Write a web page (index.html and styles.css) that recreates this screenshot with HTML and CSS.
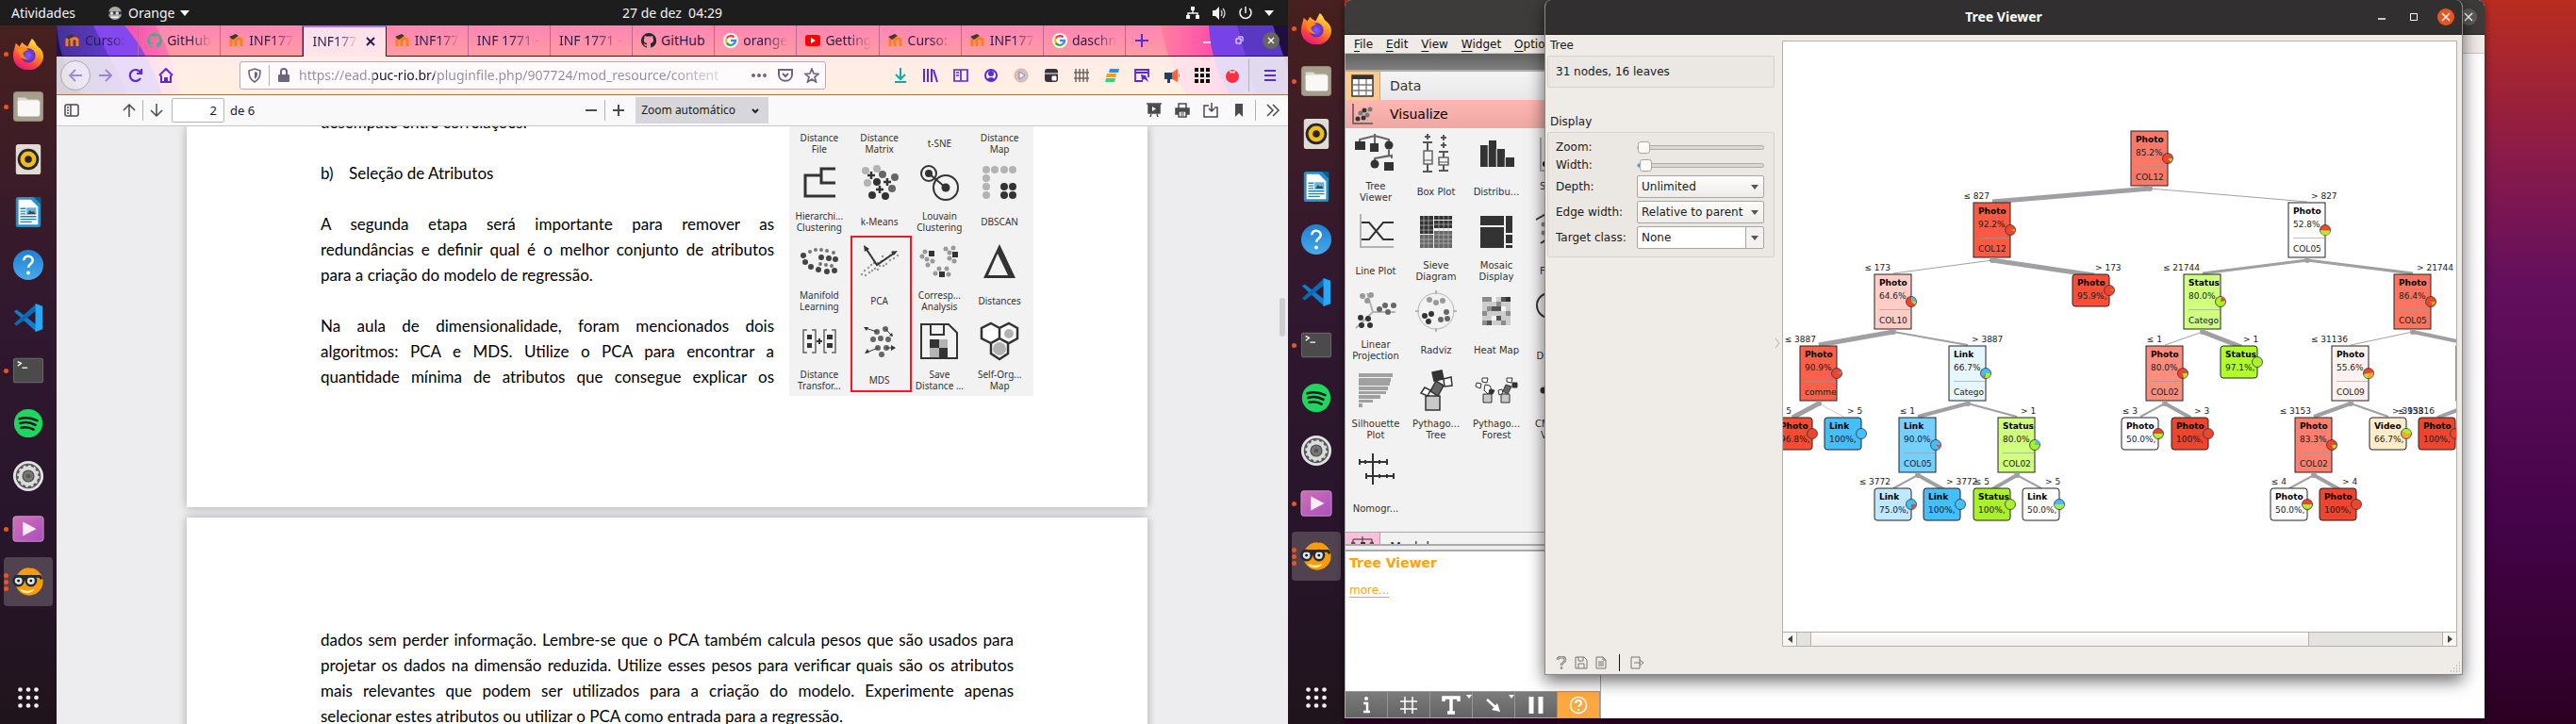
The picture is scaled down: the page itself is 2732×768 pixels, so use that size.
FILE: index.html
```html
<!DOCTYPE html>
<html lang="pt-BR">
<head>
<meta charset="utf-8">
<title>Orange – Tree Viewer</title>
<link rel="stylesheet" href="styles.css">
</head>
<body>
<svg class="defs" aria-hidden="true">
  <defs>
    <linearGradient id="g-fox" x1="0.8" y1="0" x2="0.3" y2="1"><stop offset="0" stop-color="#fff44f"/><stop offset=".4" stop-color="#ff9a1f"/><stop offset=".75" stop-color="#ff3d47"/><stop offset="1" stop-color="#e31587"/></linearGradient>
    <radialGradient id="g-globe"><stop offset="0" stop-color="#8a5cff"/><stop offset="1" stop-color="#5f2bb8"/></radialGradient>
    <linearGradient id="g-help" x1="0" y1="0" x2="0" y2="1"><stop offset="0" stop-color="#1d7fd6"/><stop offset="1" stop-color="#4aa9e8"/></linearGradient>
    <linearGradient id="g-video" x1="0" y1="0" x2="1" y2="1"><stop offset="0" stop-color="#d170b4"/><stop offset="1" stop-color="#a94fc0"/></linearGradient>
    <symbol id="i-firefox" viewBox="0 0 36 36"><path d="M22 1c5 4 4 7 7 9 4 3 6 7 6 11A17 16 0 0 1 1 20C1 15 3 11 4 6l4 4 3-5c2 3 4 3 6 5 2-3 3-6 5-9z" fill="url(#g-fox)"/><circle cx="18" cy="20" r="8" fill="url(#g-globe)"/><path d="M6 12c5-2 8-2 12 2-3 0-4 2-6 3 0 3 2 6 6 7-6 1-11-2-12-12z" fill="#ff8a16"/></symbol>
    <symbol id="i-files" viewBox="0 0 36 36"><rect x="1" y="1" width="34" height="34" rx="4" fill="#8f8773"/><rect x="2" y="2" width="32" height="32" rx="3" fill="#a69f8c"/><path d="M6 8h9l2 2h12v5H6z" fill="#ddd9cf"/><rect x="6" y="11" width="25" height="18" rx="2" fill="#f9f8f6"/></symbol>
    <symbol id="i-music" viewBox="0 0 36 36"><rect x="4" y="1" width="28" height="34" rx="3" fill="#e0dcd2"/><circle cx="18" cy="18" r="12" fill="#24252f"/><circle cx="18" cy="18" r="9" fill="#f2bd17"/><circle cx="18" cy="18" r="4" fill="#24252f"/></symbol>
    <symbol id="i-writer" viewBox="0 0 36 36"><rect x="4" y="1" width="28" height="34" rx="3" fill="#2690c6"/><path d="M24 1h8v8z" fill="#0e5a86"/><path d="M7 4h14l8 8v20H7z" fill="#fff"/><path d="M9 14h6M9 17h6M9 20h6M9 23h18M9 26h18M9 29h13" stroke="#1b82b8" stroke-width="1.4"/><path d="M16 13h11v8H16z" fill="#64b5dd"/><path d="M17 20l3-4 2 2 2-1 2 3z" fill="#444"/></symbol>
    <symbol id="i-help" viewBox="0 0 36 36"><circle cx="18" cy="18" r="17" fill="url(#g-help)"/><path d="M13 13c0-7 10-6 10 0 0 4-5 4-5 8" fill="none" stroke="#fff" stroke-width="2.6"/><circle cx="18" cy="27" r="2" fill="#fff"/></symbol>
    <symbol id="i-code" viewBox="0 0 36 36"><path d="M2 11l3-2 22 17v8z" fill="#0e7fd0"/><path d="M2 25l3 2L27 10V2z" fill="#0a6ab5"/><path d="M26 2l8 3v26l-8 3z" fill="#2aa7f5"/></symbol>
    <symbol id="i-term" viewBox="0 0 36 36"><rect x="1" y="4" width="34" height="28" rx="3" fill="#6a6a6a"/><rect x="2" y="5" width="32" height="26" rx="2" fill="#4b4b4b"/><path d="M6 8l4 2-4 3M11 15h6" fill="none" stroke="#fff" stroke-width="1.4"/></symbol>
    <symbol id="i-spotify" viewBox="0 0 36 36"><circle cx="18" cy="18" r="16" fill="#1ed760"/><path d="M8 13c7-2 14-1 20 2M9 18c6-2 12-1 17 2M10 23c5-1 9-1 14 2" fill="none" stroke="#191a19" stroke-width="2.6" stroke-linecap="round"/></symbol>
    <symbol id="i-gear" viewBox="0 0 36 36"><circle cx="18" cy="18" r="17" fill="#e2e2e2"/><circle cx="18" cy="18" r="14" fill="#555"/><circle cx="18" cy="18" r="9" fill="none" stroke="#dcdcdc" stroke-width="4"/><circle cx="18" cy="18" r="11.500" fill="none" stroke="#dcdcdc" stroke-width="2" stroke-dasharray="3 3"/><circle cx="18" cy="18" r="4" fill="none" stroke="#777" stroke-width="3"/></symbol>
    <symbol id="i-video" viewBox="0 0 36 36"><rect x="1" y="4" width="34" height="28" rx="3" fill="url(#g-video)" stroke="#c89ac8"/><path d="M12 10l15 8-15 8z" fill="#f8eaf6"/></symbol>
    <symbol id="i-orange" viewBox="0 0 36 36"><circle cx="19" cy="18" r="15.500" fill="#f79a0c"/><circle cx="7" cy="17" r="5.500" fill="#dfe3ee" stroke="#252a2c" stroke-width="2.600"/><circle cx="21" cy="17" r="5.500" fill="#dfe3ee" stroke="#252a2c" stroke-width="2.600"/><path d="M3 12h28l2 3M12 15h4" fill="none" stroke="#252a2c" stroke-width="3"/><circle cx="7" cy="17" r="1.500"/><circle cx="21" cy="17" r="1.500"/><path d="M8 26c6 3 12 3 17 0-2 6-14 7-17 0z" fill="#fff1a0"/><path d="M20 3l2-2" stroke="#333"/></symbol>
    <symbol id="i-apps" viewBox="0 0 36 36"><path d="M9 9h0M18 9h0M27 9h0M9 18h0M18 18h0M27 18h0M9 27h0M18 27h0M27 27h0" stroke="#f0eff0" stroke-width="5" stroke-linecap="round"/></symbol>
    <symbol id="f-moodle" viewBox="0 0 16 16"><path d="M2 14V8c0-3 5-3 5 0v6M7 8c0-3 6-3 6 0v6" fill="none" stroke="#f98012" stroke-width="3"/><path d="M0 4l7-3 3 2-6 4z" fill="#3a3a3a"/></symbol>
    <symbol id="f-github" viewBox="0 0 16 16"><path d="M8 0a8 8 0 0 0-2.500 15.600c.4.100.5-.2.500-.4v-1.500c-2 .4-2.600-.9-2.700-1.300-.2-.4-.6-.9-.9-1 1.500-.5 1.800 1.300 3.600.7.100-.5.300-.8.500-1C3.500 10.500 2.800 9.200 2.800 7.300c0-.9.300-1.600.8-2.100 0-.2-.4-1.100.1-2.200 0 0 .7-.2 2.300.8a7 7 0 0 1 4 0c1.600-1 2.200-.8 2.200-.8.500 1.100.2 2 .1 2.200.5.500.8 1.200.8 2.100 0 2-.8 3.200-3.500 3.700.3.300.5.800.5 1.500v2.700c0 .2.100.5.500.4A8 8 0 0 0 8 0z" fill="currentColor"/></symbol>
    <symbol id="f-google" viewBox="0 0 16 16"><circle cx="8" cy="8" r="8" fill="#fff"/><g fill="none" stroke-width="2.400"><path d="M11.500 4.500A5 5 0 0 0 3.700 5.500" stroke="#ea4335"/><path d="M3.700 5.500a5 5 0 0 0 0 5" stroke="#fbbc05"/><path d="M3.700 10.500a5 5 0 0 0 7.500 1.200" stroke="#34a853"/><path d="M11.200 11.700A5 5 0 0 0 13 8H8" stroke="#4285f4"/></g></symbol>
    <symbol id="f-youtube" viewBox="0 0 16 16"><rect y="2" width="16" height="12" rx="3" fill="#f00"/><path d="M6 5l5 3-5 3z" fill="#fff"/></symbol>
  </defs>
</svg>

<main class="desktop">
  <section class="screen screen-left">
    <header class="topbar">
      <div class="topbar-left"><button>Atividades</button>
        <button class="app-menu"><svg width="16" height="16" viewBox="0 0 36 36"><circle cx="18" cy="18" r="16" fill="#aaa"/><path d="M2 14h32v7H2z" fill="#333"/><circle cx="10" cy="18" r="4" fill="#ddd"/><circle cx="23" cy="18" r="4" fill="#ddd"/><path d="M8 26h18v3H8z" fill="#fff"/></svg>Orange<svg width="10" height="6" viewBox="0 0 10 6"><path d="M0 0h10L5 6z" fill="#fff"/></svg></button></div>
      <time class="clock">27 de dez&nbsp; 04:29</time>
      <div class="topbar-right">
        <svg width="16" height="16" viewBox="0 0 16 16" fill="#f2f2f2"><path d="M6 1h4v4H6zM1 10h4v4H1zM11 10h4v4h-4z"/><path d="M8 5v3M3 10V8h10v2" fill="none" stroke="#f2f2f2" stroke-width="1.500"/></svg>
        <svg width="16" height="16" viewBox="0 0 16 16" fill="#f2f2f2"><path d="M1 5h3l4-4v14l-4-4H1z"/><path d="M10 5q2 3 0 6M12 3q4 5 0 10" fill="none" stroke="#ccc" stroke-width="1.400"/></svg>
        <svg width="16" height="16" viewBox="0 0 16 16" fill="none" stroke="#f2f2f2" stroke-width="1.500"><path d="M8 1v7M4 3a6 6 0 1 0 8 0"/></svg>
        <svg width="10" height="6" viewBox="0 0 10 6"><path d="M0 0h10L5 6z" fill="#fff"/></svg>
      </div>
    </header>
    <div class="screen-body">
      <nav class="dock" aria-label="Dock">
        <a href="#" class="dock-item run" aria-label="Firefox"><svg><use href="#i-firefox"/></svg></a>
        <a href="#" class="dock-item run" aria-label="Arquivos"><svg><use href="#i-files"/></svg></a>
        <a href="#" class="dock-item" aria-label="Rhythmbox"><svg><use href="#i-music"/></svg></a>
        <a href="#" class="dock-item" aria-label="Writer"><svg><use href="#i-writer"/></svg></a>
        <a href="#" class="dock-item" aria-label="Ajuda"><svg><use href="#i-help"/></svg></a>
        <a href="#" class="dock-item" aria-label="Code"><svg><use href="#i-code"/></svg></a>
        <a href="#" class="dock-item run" aria-label="Terminal"><svg><use href="#i-term"/></svg></a>
        <a href="#" class="dock-item" aria-label="Spotify"><svg><use href="#i-spotify"/></svg></a>
        <a href="#" class="dock-item" aria-label="Ajustes"><svg><use href="#i-gear"/></svg></a>
        <a href="#" class="dock-item run" aria-label="Vídeos"><svg><use href="#i-video"/></svg></a>
        <a href="#" class="dock-item run many active" aria-label="Orange"><svg><use href="#i-orange"/></svg></a>
        <a href="#" class="dock-item dock-apps" aria-label="Aplicativos"><svg><use href="#i-apps"/></svg></a>
      </nav>
      <div class="browser">
        <header class="chrome">
          <svg class="theme theme-l" width="140" height="73" viewBox="0 0 140 73"><defs><linearGradient id="tl"><stop offset="0" stop-color="#45309a"/><stop offset="1" stop-color="#6a3fd8"/></linearGradient><linearGradient id="tp" x1="0" y1="0" x2="1" y2="0"><stop offset=".5" stop-color="#ff3fb4"/><stop offset="1" stop-color="#ff7fae"/></linearGradient></defs><path d="M0 0H105Q122 30 132 73H0z" fill="url(#tp)" opacity=".9"/><path d="M0 0H72Q98 30 112 73H0z" fill="#8547ee"/><path d="M0 0H39L76 73H0z" fill="url(#tl)"/><path d="M0 0Q3 40 27 73H0z" fill="#24124e"/></svg>
          <svg class="theme theme-r" width="140" height="73" viewBox="0 0 140 73"><defs><linearGradient id="tr" x1="0" y1="0" x2="1" y2="0"><stop offset="0" stop-color="#ff7fa0"/><stop offset=".5" stop-color="#ff45ae"/></linearGradient></defs><path d="M5 0H140V73H32Q12 40 5 0z" fill="url(#tr)"/><path d="M56 0H140V73H78Q58 40 56 0z" fill="#7743e6"/><path d="M86 0H140V73H106z" fill="#5b38c4"/><path d="M124 0H140V46z" fill="#1d1040"/></svg>
          <div class="tabs" role="tablist">
            <button class="tab" role="tab"><svg><use href="#f-moodle"/></svg><span>Curso: </span></button>
            <button class="tab green" role="tab"><svg><use href="#f-github"/></svg><span>GitHub</span></button>
            <button class="tab" role="tab"><svg><use href="#f-moodle"/></svg><span>INF177</span></button>
            <button class="tab current" role="tab" aria-selected="true"><span>INF177</span><svg viewBox="0 0 16 16"><path d="M4 4l8 8M12 4l-8 8" stroke="#2b1a4d" stroke-width="2"/></svg></button>
            <button class="tab" role="tab"><svg><use href="#f-moodle"/></svg><span>INF177</span></button>
            <button class="tab" role="tab"><span>INF 1771 -</span></button>
            <button class="tab" role="tab"><span>INF 1771 -</span></button>
            <button class="tab dark" role="tab"><svg><use href="#f-github"/></svg><span class="full">GitHub</span></button>
            <button class="tab" role="tab"><svg><use href="#f-google"/></svg><span>orange</span></button>
            <button class="tab" role="tab"><svg><use href="#f-youtube"/></svg><span>Getting</span></button>
            <button class="tab" role="tab"><svg><use href="#f-moodle"/></svg><span>Curso: </span></button>
            <button class="tab" role="tab"><svg><use href="#f-moodle"/></svg><span>INF177</span></button>
            <button class="tab" role="tab"><svg><use href="#f-google"/></svg><span>daschn</span></button>
            <div class="tab-tools">
              <button aria-label="Nova aba"><svg width="16" height="16" viewBox="0 0 16 16"><path d="M8 1v14M1 8h14" stroke="#5b2ad0" stroke-width="2"/></svg></button>
              <div class="win-controls">
                <button aria-label="Minimizar"><svg width="18" height="18" viewBox="0 0 18 18"><path d="M5 11h8" stroke="#fff" stroke-width="1.500"/></svg></button>
                <button aria-label="Restaurar"><svg width="18" height="18" viewBox="0 0 18 18"><path d="M6 7h5v5H6zM8 5h5v5" fill="none" stroke="#fff"/></svg></button>
                <button aria-label="Fechar"><svg width="18" height="18" viewBox="0 0 18 18"><circle cx="9" cy="9" r="9" fill="#69665c"/><path d="M6 6l6 6M12 6l-6 6" stroke="#fff" stroke-width="1.300"/></svg></button>
              </div>
            </div>
          </div>
          <div class="navbar">
            <button class="back" aria-label="Voltar"><svg viewBox="0 0 16 16"><path d="M15 8H2M8 2L2 8l6 6"/></svg></button>
            <button class="faded" aria-label="Avançar"><svg viewBox="0 0 16 16"><path d="M1 8h13M8 2l6 6-6 6"/></svg></button>
            <button aria-label="Recarregar"><svg viewBox="0 0 16 16"><path d="M13 11a6 6 0 1 1 0-6M14 1v5H9" stroke-width="2.200"/></svg></button>
            <button aria-label="Início"><svg viewBox="0 0 16 16"><path d="M1 8l7-7 7 7M3 8v7h10V8M7 15v-4h2v4" stroke-width="2"/></svg></button>
            <div class="urlbar">
              <svg width="16" height="16" viewBox="0 0 16 16"><path d="M8 1l6 2c0 6-1 9-6 12C3 12 2 9 2 3z" fill="none" stroke="#6c6580" stroke-width="1.600"/><path d="M8 4l3 1c0 3 0 5-3 7z" fill="#6c6580"/></svg>
              <i class="vsep"></i>
              <svg width="16" height="16" viewBox="0 0 16 16"><rect x="2" y="7" width="12" height="8" rx="1" fill="#6c6580"/><path d="M5 7V4a3 3 0 0 1 6 0v3" fill="none" stroke="#6c6580" stroke-width="2"/></svg>
              <input class="url" aria-label="Endereço" value="https://ead.puc-rio.br/pluginfile.php/907724/mod_resource/content">
              <svg width="16" height="16" viewBox="0 0 16 16"><path d="M2 8h0M8 8h0M14 8h0" stroke="#6c6580" stroke-width="4" stroke-linecap="round"/></svg>
              <svg width="16" height="16" viewBox="0 0 16 16" fill="none" stroke="#6c6580" stroke-width="2"><path d="M1 2h14v5c0 9-14 9-14 0zM5 6l3 3 3-3"/></svg>
              <svg width="16" height="16" viewBox="0 0 16 16" fill="none" stroke="#6c6580" stroke-width="1.700"><path d="M8 1l2 5 5 .4-4 3.400L12.500 15 8 12l-4.500 3L5 9.800 1 6.400 6 6z"/></svg>
            </div>
            <div class="exts">
              <svg viewBox="0 0 16 16"><path d="M8 0v11M3 7l5 5 5-5M2 15h12" fill="none" stroke="#12a8a8" stroke-width="2"/></svg>
              <svg viewBox="0 0 16 16"><path d="M1 1v14M5 1v14M9 1v14M11 2l4 13" fill="none" stroke="#5b2ad0" stroke-width="2"/></svg>
              <svg viewBox="0 0 16 16"><path d="M1 2h14v12H1zM8 2v12M3 5h3M3 8h3" fill="none" stroke="#5b2ad0" stroke-width="1.700"/></svg>
              <svg viewBox="0 0 16 16"><circle cx="8" cy="8" r="6" fill="none" stroke="#5b2ad0" stroke-width="2"/><circle cx="8" cy="6" r="3" fill="#5b2ad0"/><path d="M4 12q4-4 8 0l-4 2z" fill="#5b2ad0"/></svg>
              <svg viewBox="0 0 16 16"><circle cx="8" cy="8" r="7" fill="#cfc0cc" stroke="#eba98a"/><path d="M6 4l6 4-6 4z" fill="#fff" stroke="#8c80a8"/></svg>
              <svg viewBox="0 0 16 16"><rect x="1" y="1" width="14" height="14" rx="3" fill="#38333a"/><path d="M1 6h14M9 9h4v4H9z" stroke="#fff" fill="#fff"/></svg>
              <svg viewBox="0 0 16 16"><path d="M2 1v14M6 1v14M10 1v14M14 1v14M0 5h16M0 11h16" stroke="#6c6568" stroke-width="1.500"/></svg>
              <svg viewBox="0 0 16 16"><path d="M6 1h10l-1 4H5z" fill="#2a8df4"/><path d="M3 6h10l-1 4H2z" fill="#ff9d00"/><path d="M2 11h10l-1 4H1z" fill="#3bd07a"/></svg>
              <svg viewBox="0 0 16 16"><path d="M9 14H1V2h14v8M1 5h14" fill="none" stroke="#5b2ad0" stroke-width="1.800"/><path d="M7 7l5 1 3 7-4-3-3 1z" fill="#5b2ad0"/></svg>
              <svg viewBox="0 0 16 16"><path d="M0 5h8v7H6v4H3v-4H0z" fill="#24405c"/><path d="M8 5l6-4v14l-6-3z" fill="#f96538"/><path d="M15 6h1v4h-1z" fill="#999"/></svg>
              <svg viewBox="0 0 16 16"><path d="M0 0h4v4H0zM6 0h4v4H6zM12 0h4v4h-4zM0 6h4v4H0zM6 6h4v4H6zM12 6h4v4h-4zM0 12h4v4H0zM6 12h4v4H6zM12 12h4v4h-4z"/></svg>
              <svg viewBox="0 0 16 16"><circle cx="8" cy="9" r="7" fill="#fb2f3f"/><path d="M8 4L4 2l2 4 2-1 2 1 2-4z" fill="#ffe0e0"/></svg>
            </div>
            <i class="vsep tall"></i>
            <button class="menu" aria-label="Menu"><svg viewBox="0 0 16 16"><path d="M2 3h12M2 8h12M2 13h12" stroke-width="2"/></svg></button>
          </div>
        </header>
        <div class="pdfbar">
          <button aria-label="Painel lateral"><svg viewBox="0 0 16 16"><rect x="1" y="2" width="14" height="12" rx="2"/><path d="M7 2v12M3 5h2M3 8h2M3 11h2"/></svg></button>
          <div class="pdf-group pdf-nav">
            <button aria-label="Anterior"><svg viewBox="0 0 16 16"><path d="M8 15V2M2 8l6-6 6 6"/></svg></button><i class="vsep"></i>
            <button aria-label="Próxima"><svg viewBox="0 0 16 16"><path d="M8 1v13M2 8l6 6 6-6"/></svg></button>
            <input class="page-no" id="page-no" value="2" aria-label="Página"><label for="page-no">de 6</label>
          </div>
          <div class="pdf-group pdf-zoom">
            <button aria-label="Reduzir"><svg viewBox="0 0 16 16"><path d="M2 8h12" stroke-width="2"/></svg></button><i class="vsep"></i>
            <button aria-label="Ampliar"><svg viewBox="0 0 16 16"><path d="M2 8h12M8 2v12" stroke-width="2"/></svg></button>
            <div class="select-wrap zoom-wrap"><select aria-label="Zoom"><option>Zoom automático</option></select><svg class="arrow" width="8" height="6" viewBox="0 0 8 6"><path d="M1 1l3 3 3-3" fill="none" stroke="#222" stroke-width="2"/></svg></div>
          </div>
          <div class="pdf-group pdf-right">
            <button aria-label="Apresentação"><svg viewBox="0 0 16 16"><path d="M0 1h16" /><path d="M2 2h12v9H2z" fill="#4a4a4f"/><path d="M6 4l4 2.500L6 9z" fill="#fff" stroke="none"/><path d="M5 12l-1 3M11 12l1 3"/></svg></button>
            <button aria-label="Imprimir"><svg viewBox="0 0 16 16"><path d="M4 6V1h8v5"/><path d="M1 6h14v6H1z" fill="#4a4a4f"/><path d="M4 9h8v6H4z" fill="#fff"/><path d="M6 11h4M6 13h4" stroke-width="1"/></svg></button>
            <button aria-label="Baixar"><svg viewBox="0 0 16 16"><path d="M6 3H1v12h14V5h-3M9 0v8M6 6l3 3 3-3"/></svg></button>
            <button aria-label="Marcador"><svg viewBox="0 0 16 16"><path d="M4 1h8v14l-4-4-4 4z" fill="#4a4a4f" stroke="none"/></svg></button>
            <i class="vsep"></i>
            <button aria-label="Ferramentas"><svg viewBox="0 0 16 16"><path d="M2 2l6 6-6 6M8 2l6 6-6 6"/></svg></button>
          </div>
        </div>
        <div class="pdf-view">
          <article class="page page-a">
            <div class="text">
              <p>desempate entre correlações.</p>
              <h2><span>b)</span>Seleção de Atributos</h2>
              <p class="just"><span>A segunda etapa será importante para remover as</span><span>redundâncias e definir qual é o melhor conjunto de atributos</span><span class="end">para a criação do modelo de regressão.</span></p>
              <p class="just"><span>Na aula de dimensionalidade, foram mencionados dois</span><span>algoritmos: PCA e MDS. Utilize o PCA para encontrar a</span><span>quantidade mínima de atributos que consegue explicar os</span></p>
            </div>
            <figure class="figure">
              <div class="cell cap"><span>Distance<br>File</span></div><div class="cell cap"><span>Distance<br>Matrix</span></div><div class="cell cap"><span>t-SNE</span></div><div class="cell cap"><span>Distance<br>Map</span></div>
              <div class="cell"><svg viewBox="-20 -20 40 40"><path d="M17 14H-15V-8H2M17-15H2V0H17" fill="none" stroke="#333" stroke-width="3"/></svg><span>Hierarchi...<br>Clustering</span></div>
              <div class="cell"><svg viewBox="-20 -20 40 40" stroke-linecap="round" stroke-width="8"><path d="M-15-13h0M-3-15h0M-13 0h0" stroke="#b3b3b3"/><path d="M3-9h0M16-6h0M13 6h0" stroke="#666"/><path d="M-3-1h0M-8 13h0M6 14h0" stroke="#333"/><path d="M-13-8h8M-9-12v8M4-1h8M8-5v8M-4 7h8M0 3v8" stroke="#333" stroke-width="2.500" stroke-linecap="butt"/></svg><span>k-Means</span></div>
              <div class="cell"><svg viewBox="-20 -20 40 40"><g fill="none" stroke="#333" stroke-width="2"><circle cx="-11" cy="-10" r="8"/><circle cx="7" cy="5" r="13"/><path d="M-11-10L7 5"/></g><g fill="#333"><circle cx="-11" cy="-10" r="4"/><circle cx="7" cy="5" r="4.500"/></g></svg><span>Louvain<br>Clustering</span></div>
              <div class="cell"><svg viewBox="-20 -20 40 40" stroke-linecap="round" stroke-width="8"><path d="M-14-14h0M-5-14h0M5-14h0M14-14h0M-14-5h0M-14 4h0M-14 13h0" stroke="#b3b3b3"/><path d="M5 4h0M14 4h0M5 13h0M14 13h0" stroke="#333"/></svg><span>DBSCAN</span></div>
              <div class="cell"><svg viewBox="-20 -20 40 40" stroke-linecap="round" stroke-width="6" stroke="#444"><path d="M-15 0h0M-9 5h0M-1 8h0M8 10h0M16 9h0M2-5h0M10-4h0M17-3h0M-17-7h0"/><path d="M-10-11h0M-4-13h0M2-13h0M8-12h0M15-10h0M13 4h0M7 3h0M1 2h0" stroke="#777" stroke-width="4"/></svg><span>Manifold<br>Learning</span></div>
              <div class="cell"><svg viewBox="-20 -20 40 40"><path d="M-19 13h0M-15 14h0M-16 9h0M-11 11h0M-12 6h0M-8 9h0M-9 3h0M-5 7h0M-2 8h0M-6 1h0M0 4h0M4 4h0M2-1h0M7 2h0M7-4h0M11-2h0M11-7h0M15-4h0M19-7h0M14-11h0M-2 1h0M3-6h0" stroke="#999" stroke-width="2.500" stroke-linecap="round"/><path d="M-15-15L-3 3 16-10" fill="none" stroke="#333" stroke-width="2"/><path d="M-17-18l6 4-5 3zM19-12l-7 1 3 4z" fill="#333"/></svg><span>PCA</span></div>
              <div class="cell"><svg viewBox="-20 -20 40 40"><path d="M-15-11h0M-18-6h0M-13-3h0M-7-1h0M-12 3h0M7-14h0M15-15h0M11-10h0M11-4h0M16-1h0M0 7h0M8 7h0M-4 12h0M10 13h0" stroke="#999" stroke-width="5" stroke-linecap="round"/><path d="M-11-12h6v6h-6zM14-11h6v6h-6zM0 10h6v6H0z" fill="#333"/></svg><span>Corresp...<br>Analysis</span></div>
              <div class="cell"><svg viewBox="-20 -20 40 40"><path d="M0-19L17 17H-17zM-2-9L-12 14H9z" fill="#333" fill-rule="evenodd"/></svg><span>Distances</span></div>
              <div class="cell"><svg viewBox="-20 -20 40 40"><path d="M-13-12h-4v24h4M-8-12h4v24h-4M8-12h-3v24h3M13-12h4v24h-4" fill="none" stroke="#666" stroke-width="1.500"/><path d="M-13-7h5v5h-5zM-13 2h5v5h-5zM8-7h6v5H8zM8 2h6v5H8zM-3-1h6v2h-6zM-1-3h2v6h-2z" fill="#333"/></svg><span>Distance<br>Transfor...</span></div>
              <div class="cell"><svg viewBox="-20 -20 40 40"><path d="M-3-10h0M6-13h0M-7-2h0M1-3h0M9-2h0M-2 7h0M7 7h0M2 14h0" stroke="#666" stroke-width="6" stroke-linecap="round"/><path d="M-3-10l-12-4M6-13l7 7M-2 7l-12 5M7 7h8" stroke="#333"/><path d="M-17-15h5l-2 4zM14-5l-4-1 3-3zM-16 13l3-5 2 4zM17 7l-5-3v6z" fill="#333"/></svg><span>MDS</span></div>
              <div class="cell"><svg viewBox="-20 -20 40 40"><path d="M-19-18H10L19-9V18H-19zM-9-18v11H5v-11" fill="none" stroke="#333" stroke-width="2"/><path d="M-10-2H0v9h-10zM0 7h9v10H0z" fill="#333"/><path d="M0-2h9v9H0zM-10 7H0v10h-10z" fill="#b3b3b3"/></svg><span>Save<br>Distance ...</span></div>
              <div class="cell"><svg viewBox="-20 -20 40 40"><path d="M-9-19l9 5v11l-9 5-10-5v-11zM10-19l9 5v11l-9 5-10-5v-11zM0-3l9 5v11l-9 6-9-6V2z" fill="#fff" stroke="#333" stroke-width="2.500"/><circle cx="10" cy="-8" r="5" fill="#b3b3b3"/><circle cy="8" r="7" fill="#b3b3b3"/></svg><span>Self-Org...<br>Map</span></div>
              <i class="marker"></i>
            </figure>
          </article>
          <article class="page page-b">
            <p class="just"><span>dados sem perder informação. Lembre-se que o PCA também calcula pesos que são usados para</span><span>projetar os dados na dimensão reduzida. Utilize esses pesos para verificar quais são os atributos</span><span>mais relevantes que podem ser utilizados para a criação do modelo. Experimente apenas</span><span class="end">selecionar estes atributos ou utilizar o PCA como entrada para a regressão.</span></p>
          </article>
          <i class="v-thumb"></i>
        </div>
      </div>
    </div>
  </section>

  <section class="screen screen-right">
    <nav class="dock" aria-label="Dock">
      <a href="#" class="dock-item run" aria-label="Firefox"><svg><use href="#i-firefox"/></svg></a>
      <a href="#" class="dock-item run" aria-label="Arquivos"><svg><use href="#i-files"/></svg></a>
      <a href="#" class="dock-item" aria-label="Rhythmbox"><svg><use href="#i-music"/></svg></a>
      <a href="#" class="dock-item" aria-label="Writer"><svg><use href="#i-writer"/></svg></a>
      <a href="#" class="dock-item" aria-label="Ajuda"><svg><use href="#i-help"/></svg></a>
      <a href="#" class="dock-item" aria-label="Code"><svg><use href="#i-code"/></svg></a>
      <a href="#" class="dock-item run" aria-label="Terminal"><svg><use href="#i-term"/></svg></a>
      <a href="#" class="dock-item" aria-label="Spotify"><svg><use href="#i-spotify"/></svg></a>
      <a href="#" class="dock-item" aria-label="Ajustes"><svg><use href="#i-gear"/></svg></a>
      <a href="#" class="dock-item run" aria-label="Vídeos"><svg><use href="#i-video"/></svg></a>
      <a href="#" class="dock-item run many active" aria-label="Orange"><svg><use href="#i-orange"/></svg></a>
      <a href="#" class="dock-item dock-apps" aria-label="Aplicativos"><svg><use href="#i-apps"/></svg></a>
    </nav>
    <div class="workspace">
      <section class="window main-win">
        <header class="titlebar"><div class="win-controls"><button aria-label="Fechar"><svg width="18" height="18" viewBox="0 0 18 18"><circle cx="9" cy="9" r="9" fill="#5d5c5a"/><path d="M5 5l8 8M13 5l-8 8" stroke="#fff" stroke-width="1.500"/></svg></button></div></header>
        <nav class="menubar"><button><u>F</u>ile</button><button><u>E</u>dit</button><button><u>V</u>iew</button><button><u>W</u>idget</button><button><u>O</u>ptions</button></nav>
        <div class="main-body">
          <aside class="toolbox">
            <div class="tool-head"></div>
            <div class="drawer">
              <button class="category data"><span class="cat-icon"><svg width="24" height="24" viewBox="0 0 24 24"><path d="M1 1h22v22H1z" fill="#fff" stroke="#333" stroke-width="1.500"/><path d="M1 1h22v4H1z" fill="#333"/><path d="M1 11h22M1 17h22M8 5v18M16 5v18" stroke="#777" stroke-width="1.300"/></svg></span>Data</button>
              <button class="category vis"><span class="cat-icon"><svg width="24" height="24" viewBox="0 0 24 24"><path d="M2 1v21h21" fill="none" stroke="#555" stroke-width="1.500"/><g stroke-width="5" stroke-linecap="round"><path d="M7 17h0M13 16h0M14 8h0" stroke="#333"/><path d="M10 11h0M17 13h0M20 7h0" stroke="#777"/></g></svg></span>Visualize</button>
              <div class="widgets">
                <div class="cell"><svg viewBox="-20 -20 40 40"><path d="M-1-20v12M-17-8v-6l16-4 15 4v6M14-3v6L-1 6v6M-1 6l18-3v3" fill="none" stroke="#666" stroke-width="2"/><path d="M-22-12h11v9h-11zM-6-10h9v9h-9zM9 10h10v9H9z" fill="#333"/><g fill="#333"><circle cx="14" cy="-8" r="4.500"/><circle cx="-1" cy="12" r="4.500"/></g></svg><span>Tree<br>Viewer</span></div>
                <div class="cell"><svg viewBox="-20 -20 40 40"><path d="M-9-20v6M-12-17h6M-9-11V20M-14-11h10M-14 20h10M8-19v6M5-16h6M8-11v6M5-8h6M8-1V19M3-1h10M3 19h10" stroke="#555" stroke-width="2"/><path d="M-13-2h9v14h-9zM3 5h10v8H3z" fill="#f2f2f2" stroke="#666" stroke-width="1.500"/><path d="M-13 8h9M3 10h10" stroke="#555"/></svg><span>Box Plot</span></div>
                <div class="cell"><svg viewBox="-20 -20 40 40"><path d="M-17-8h8v23h-8zM-8-13h8v28h-8zM1-4h8v19H1zM10 5h9v10h-9z" fill="#333"/><path d="M-9-8v23M0-4v19M9 5v10" stroke="#999"/></svg><span>Distribu...</span></div>
                <div class="cell"><svg viewBox="-20 -20 40 40"><path d="M-17-16v35h34" fill="none" stroke="#aaa" stroke-width="2"/><circle cx="-12" cy="12" r="3"/></svg><span>Scatter<br>Plot</span></div>
                <div class="cell"><svg viewBox="-20 -20 40 40"><path d="M-16-19v35h35" fill="none" stroke="#b3b3b3" stroke-width="2"/><path d="M-15-10h8L8 8h11M-15 8h8L8-10h11" fill="none" stroke="#333" stroke-width="2"/></svg><span>Line Plot</span></div>
                <div class="cell"><svg viewBox="-20 -20 40 40"><path d="M-17-17h14v19h-14zM-2-17h19v4H-2zM-2-12h19v8H-2z" fill="#333"/><path d="M-17 3h14v14h-14zM-2-1h19v18H-2z" fill="#666"/><path d="M-13-17v34M-8-17v34M3-17v34M8-17v34M13-17v34M-17-12h14M-17-7h14M-17-2h14M-17 8h34M-17 12h34M-2-8h19M-2 3h19" stroke="#bbb" stroke-width=".7"/></svg><span>Sieve<br>Diagram</span></div>
                <div class="cell"><svg viewBox="-20 -20 40 40"><path d="M-17-17H8v10h-25zM-17-5H8v22h-25zM10-17h7V1h-7zM10 3h7v9h-7zM10 14h7v3h-7z" fill="#333"/></svg><span>Mosaic<br>Display</span></div>
                <div class="cell"><svg viewBox="-20 -20 40 40"><path d="M-22-13l14-8M-17 12l8-5" stroke="#333" stroke-width="2"/><path d="M-14-8h0M-14 1h0" stroke="#888" stroke-width="5" stroke-linecap="round"/></svg><span>FreeViz</span></div>
                <div class="cell"><svg viewBox="-20 -20 40 40"><path d="M-21 18L-3 1l-6-20M-3 1h24" fill="none" stroke="#b3b3b3" stroke-width="2"/><g stroke-width="6" stroke-linecap="round"><path d="M-14-16h0M-5-17h0M-9-11h0" stroke="#999"/><path d="M4-2h0M10-6h0M19-6h0M13 1h0" stroke="#666"/><path d="M-16 7h0M-8 8h0M-15 15h0M-6 15h0" stroke="#333"/></g></svg><span>Linear<br>Projection</span></div>
                <div class="cell"><svg viewBox="-20 -20 40 40"><circle r="19" fill="none" stroke="#b3b3b3"/><path d="M0-22v4M0 18v4M-22 0h4M18 0h4" stroke="#b3b3b3" stroke-width="2"/><g stroke-width="6" stroke-linecap="round"><path d="M-7-12h0M0-9h0M7-11h0" stroke="#999"/><path d="M11 1h0M5 9h0M12 8h0" stroke="#666"/><path d="M-12 5h0M-5 3h0M-8 11h0" stroke="#333"/></g></svg><span>Radviz</span></div>
                <div class="cell"><svg viewBox="-20 -20 40 40"><path d="M-15-15h30v30h-30z" fill="#ccc"/><path d="M5-15h10v5H5zM-5-5h10v5H-5zM-10 10h5v5h-5zM0 5h5v5H0z" fill="#555"/><path d="M-15-15h10v5h-10zM-10-5h5v5h-5zM-15 0h5v5h-5zM5-5h5v5H5zM-15 10h5v5h-5zM5 10h5v5H5zM10 0h5v5h-5zM0-10h5v5H0z" fill="#8c8c8c"/><path d="M-5-15h5v5h-5zM5-5h5v5H5zM-5 5h5v5h-5z" fill="#f4f4f4"/><path d="M10-15h5v5h-5z" fill="#333"/></svg><span>Heat Map</span></div>
                <div class="cell"><svg viewBox="-20 -20 40 40"><circle cx="-8" cy="-6" r="13" fill="none" stroke="#333" stroke-width="2"/></svg><span>Venn<br>Diagram</span></div>
                <div class="cell"><svg viewBox="-20 -20 40 40"><path d="M-18-18h36v4h-36zM-18-13h34v4h-34zM-18-9h33v4h-33zM-18-4h31v4h-31zM-18 1h29v3h-29zM-18 5H5v4h-23zM-18 10H-3v3h-15zM-18 14h4v4h-4z" fill="#a0a0a0"/></svg><span>Silhouette<br>Plot</span></div>
                <div class="cell"><svg viewBox="-20 -20 40 40" stroke="#333" stroke-width="1.500"><path d="M-11 6H4v15h-15z" fill="#c8c8c8"/><path d="M0-10l8 5L2 6l-8-5z" fill="#666"/><path d="M-4-19l10-2 2 9-10 2z" fill="#333"/><path d="M8-12l8-2 1 9-8 1zM-12-3l6 3-3 6-7-3z" fill="#fff"/></svg><span>Pythago...<br>Tree</span></div>
                <div class="cell"><svg viewBox="-20 -20 40 40" stroke="#333"><path d="M-14 4h9v9h-9zM5 4h9v9H5z" fill="#c8c8c8"/><path d="M-12-6l5 1 3 7-5 2-4-4zM-15-13h6l-1 5-5-1zM-21-8l5 1-1 5-5-2zM11-13h6l-1 5-5-1zM2 0l4-1 1 4-4 2z" fill="#fff"/><path d="M10-6l6 2-4 8-5-3z" fill="#666"/><path d="M-7-1l5 1-2 4-4-1zM17-8h5v5h-5z" fill="#333"/></svg><span>Pythago...<br>Forest</span></div>
                <div class="cell"><svg viewBox="-20 -20 40 40"><circle cx="-14" cy="0" r="3.500" fill="#333"/></svg><span>CN2 Rule<br>Viewer</span></div>
                <div class="cell"><svg viewBox="-20 -20 40 40"><path d="M-3-17V16M-17-8h29M-10 7h29M-17-11v6M12-11v6M-10 4v6M19 4v6M-11-10v4M4-10v4M4 5v4M12 5v4" stroke="#333" stroke-width="2"/></svg><span>Nomogr...</span></div>
              </div>
              <button class="category model"><span class="cat-icon"><svg width="24" height="24" viewBox="0 0 24 24"><path d="M2 8V4h20v4M12 1v8" fill="none" stroke="#333"/><path d="M2 9h0M22 9h0" stroke="#555" stroke-width="5" stroke-linecap="round"/><path d="M10 7h5v5h-5z" fill="#333"/></svg></span>Model</button>
            </div>
            <div class="splitter"></div>
            <div class="help"><h3>Tree Viewer</h3><a href="#">more...</a></div>
            <div class="tool-foot">
              <button aria-label="Info"><svg viewBox="0 0 20 20"><path d="M10 3h0" stroke="#fff" stroke-width="4" stroke-linecap="round"/><path d="M7 8h4v9M7 17h7" fill="none" stroke="#fff" stroke-width="2.500"/></svg></button>
              <button aria-label="Grade"><svg viewBox="0 0 20 20"><path d="M6 1v18M14 1v18M1 6h18M1 14h18" stroke="#fff" stroke-width="1.500"/></svg></button>
              <button aria-label="Texto"><svg viewBox="0 0 20 20"><path d="M2 6V2h16v4M10 2v17M6 18h8" fill="none" stroke="#fff" stroke-width="3.500"/><path d="M26-1h6l-3 4z" fill="#fff"/></svg></button>
              <button aria-label="Seta"><svg viewBox="0 0 20 20"><path d="M3 4l10 9" stroke="#fff" stroke-width="2.500"/><path d="M17 17l-9-2 6-7z" fill="#fff"/><path d="M26-1h6l-3 4z" fill="#fff"/></svg></button>
              <button aria-label="Pausar"><svg viewBox="0 0 20 20"><path d="M5 1v18M15 1v18" stroke="#fff" stroke-width="5"/></svg></button>
              <button class="on" aria-label="Ajuda"><svg viewBox="0 0 20 20" fill="none" stroke="#fff"><circle cx="10" cy="10" r="8.500" stroke-width="1.500"/><path d="M7 8c0-4 6-4 6 0 0 2-3 2-3 4M10 14v2" stroke-width="2"/></svg></button>
            </div>
          </aside>
          <div class="main-canvas"></div>
        </div>
      </section>

      <section class="window viewer">
        <header class="titlebar"><h1>Tree Viewer</h1>
          <div class="win-controls">
            <button aria-label="Minimizar"><svg width="18" height="18" viewBox="0 0 18 18"><path d="M5 11h8" stroke="#fff" stroke-width="1.500"/></svg></button>
            <button aria-label="Maximizar"><svg width="18" height="18" viewBox="0 0 18 18"><path d="M5.500 5.500h7v7h-7z" fill="none" stroke="#fff"/></svg></button>
            <button aria-label="Fechar"><svg width="18" height="18" viewBox="0 0 18 18"><circle cx="9" cy="9" r="9" fill="#e95420"/><path d="M5 5l8 8M13 5l-8 8" stroke="#fff" stroke-width="1.500"/></svg></button>
          </div></header>
        <div class="viewer-body">
          <aside class="controls">
            <h2>Tree</h2>
            <div class="box info">31 nodes, 16 leaves</div>
            <h2 class="second">Display</h2>
            <form class="box form">
              <label for="zoom">Zoom:</label><input type="range" id="zoom" min="0" max="100" value="0">
              <label for="width">Width:</label><input type="range" id="width" class="filled" min="0" max="100" value="2">
              <label for="depth" class="row">Depth:</label><div class="select-wrap"><select id="depth"><option>Unlimited</option></select><svg class="arrow" width="8" height="5" viewBox="0 0 8 5"><path d="M0 0h8L4 5z" fill="#555"/></svg></div>
              <label for="edge" class="row">Edge width:</label><div class="select-wrap"><select id="edge"><option>Relative to parent</option></select><svg class="arrow" width="8" height="5" viewBox="0 0 8 5"><path d="M0 0h8L4 5z" fill="#555"/></svg></div>
              <label for="target" class="row">Target class:</label><div class="select-wrap combo"><select id="target"><option>None</option></select><svg class="arrow" width="8" height="5" viewBox="0 0 8 5"><path d="M0 0h8L4 5z" fill="#555"/></svg></div>
            </form>
            <svg class="handle" width="6" height="10" viewBox="0 0 6 10"><path d="M1 0l4 5-4 5" fill="none" stroke="#aaa"/></svg>
            <div class="status">
              <button aria-label="Ajuda"><svg viewBox="0 0 14 14"><path d="M3 4c0-4 8-4 8 0 0 3-4 2-4 6" stroke-width="2.500"/><path d="M3 4c0-4 8-4 8 0 0 3-4 2-4 6" stroke="#efebe7" stroke-width=".8"/><circle cx="7" cy="12.500" r="1"/></svg></button>
              <button aria-label="Salvar"><svg viewBox="0 0 14 14"><path d="M1 1h9l3 3v9H1zM4 1v4h5V1M4 13V8h6v5"/></svg></button>
              <button aria-label="Relatório"><svg viewBox="0 0 14 14"><path d="M2 1h7l3 3v9H2zM9 1v3h3M4 6h6M4 8h6M4 10h6"/></svg></button>
              <i></i>
              <button aria-label="Saída"><svg viewBox="0 0 14 14"><path d="M10 4V1H1v12h9v-3M4 7h7M10 4l4 3-4 3z"/></svg></button>
            </div>
          </aside>
          <div class="scene-col">
            <div class="scene">
              <svg class="tree" width="100%" height="100%">
                <defs>
                  <clipPath id="nc"><rect width="39" height="58"/></clipPath>
                  <g id="hub"><circle cx="20" cy="61" r="3" fill="#a0a0a4"/></g>
                  <g id="rule"><path d="M5 37.500h33" stroke="#999" stroke-opacity=".6"/></g>
                </defs>
                <g class="edges">
                  <path d="M389 156L222 170" stroke-width="5"/><path d="M389 156L556 170"/>
                  <path d="M222 232L117 246"/><path d="M222 232L330 248" stroke-width="5"/>
                  <path d="M556 232L445 246" stroke-width="3"/><path d="M556 232L668 246" stroke-width="3"/>
                  <path d="M117 308L38 322" stroke-width="5"/><path d="M117 308L196 322" stroke-width="2"/>
                  <path d="M445 308L405 322"/><path d="M445 308L486 324" stroke-width="5"/>
                  <path d="M668 308L602 322"/><path d="M668 308L734 322" stroke-width="4"/>
                  <path d="M38 384L10 399" stroke-width="5"/><path d="M38 384L64 398" stroke="#ccc"/>
                  <path d="M196 384L143 398" stroke-width="4"/><path d="M196 384L248 398" stroke-width="2"/>
                  <path d="M405 384L379 398" stroke-width="2"/><path d="M405 384L432 399" stroke-width="4"/>
                  <path d="M602 384L563 398" stroke-width="4"/><path d="M602 384L642 398" stroke-width="2"/>
                  <path d="M734 384L694 399" stroke-width="4"/>
                  <path d="M143 460L117 474" stroke-width="2"/><path d="M143 460L170 475" stroke-width="4"/>
                  <path d="M248 460L222 475" stroke-width="4"/><path d="M248 460L274 474" stroke-width="2"/>
                  <path d="M563 460L537 474" stroke-width="2"/><path d="M563 460L590 475" stroke-width="4"/>
                </g>
                <g class="cond le">
                  <text x="219" y="167">≤ 827</text><text x="114" y="243">≤ 173</text><text x="442" y="243">≤ 21744</text>
                  <text x="35" y="319">≤ 3887</text><text x="402" y="319">≤ 1</text><text x="599" y="319">≤ 31136</text>
                  <text x="9" y="395">≤ 5</text><text x="140" y="395">≤ 1</text><text x="376" y="395">≤ 3</text><text x="560" y="395">≤ 3153</text><text x="691" y="395">≤ 93816</text>
                  <text x="114" y="470">≤ 3772</text><text x="219" y="470">≤ 5</text><text x="534" y="470">≤ 4</text>
                </g>
                <g class="cond">
                  <text x="560" y="167">&gt; 827</text><text x="331" y="243">&gt; 173</text><text x="672" y="243">&gt; 21744</text>
                  <text x="200" y="319">&gt; 3887</text><text x="488" y="319">&gt; 1</text>
                  <text x="68" y="395">&gt; 5</text><text x="252" y="395">&gt; 1</text><text x="436" y="395">&gt; 3</text><text x="646" y="395">&gt; 3153</text>
                  <text x="173" y="470">&gt; 3772</text><text x="278" y="470">&gt; 5</text><text x="593" y="470">&gt; 4</text>
                </g>
                <g class="node" transform="translate(369 95)"><rect width="39" height="58" fill="#ff7866"/><g clip-path="url(#nc)"><text x="5" y="12" class="b">Photo</text><text x="5" y="26">85.2%,</text><text x="5" y="52">COL12</text></g><use href="#rule"/><use href="#hub"/><circle cx="39" cy="29" r="5.500" fill="#ee452e"/><path d="M39 29h5a5 5 0 0 1-2 4z" fill="#a9d82b"/></g>
                <g class="node" transform="translate(202 171)"><rect width="39" height="58" fill="#ff5943"/><g clip-path="url(#nc)"><text x="5" y="12" class="b">Photo</text><text x="5" y="26">92.2%,</text><text x="5" y="52">COL12</text></g><use href="#rule"/><use href="#hub"/><circle cx="39" cy="29" r="5.500" fill="#ee452e"/><path d="M39 28.500h5v2z" fill="#e0b82b"/></g>
                <g class="node" transform="translate(536 171)"><rect width="39" height="58" fill="#fff"/><g clip-path="url(#nc)"><text x="5" y="12" class="b">Photo</text><text x="5" y="26">52.8%,</text><text x="5" y="52">COL05</text></g><use href="#rule"/><use href="#hub"/><circle cx="39" cy="29" r="5.500" fill="#ee452e"/><path d="M34 29a5 5 0 0 0 10 1z" fill="#a9f22b"/><path d="M39 29h5v1z" fill="#f9a72b"/></g>
                <g class="node" transform="translate(97 247)"><rect width="39" height="58" fill="#ffccc6"/><g clip-path="url(#nc)"><text x="5" y="12" class="b">Photo</text><text x="5" y="26">64.6%,</text><text x="5" y="52">COL10</text></g><use href="#rule"/><use href="#hub"/><circle cx="39" cy="29" r="5.500" fill="#ee452e"/><path d="M39 29v-5a5 5 0 0 1 5 5z" fill="#46befa"/><path d="M39 29h5a5 5 0 0 1-1 3z" fill="#a9f22b"/></g>
                <g class="node" transform="translate(307 247)"><rect width="39" height="34" rx="3" fill="#ff4d37"/><g clip-path="url(#nc)"><text x="5" y="12" class="b">Photo</text><text x="5" y="26">95.9%,</text></g><circle cx="39" cy="17" r="5.500" fill="#ee452e"/><path d="M39 16.500h5v1z" fill="#f9a72b"/></g>
                <g class="node" transform="translate(425 247)"><rect width="39" height="58" fill="#cfff7c"/><g clip-path="url(#nc)"><text x="5" y="12" class="b">Status</text><text x="5" y="26">80.0%,</text><text x="5" y="52">Catego</text></g><use href="#rule"/><use href="#hub"/><circle cx="39" cy="29" r="5.500" fill="#a9f22b"/><path d="M39 29l1-5a5 5 0 0 1 4 4z" fill="#ee452e"/></g>
                <g class="node" transform="translate(648 247)"><rect width="39" height="58" fill="#ff7461"/><g clip-path="url(#nc)"><text x="5" y="12" class="b">Photo</text><text x="5" y="26">86.4%,</text><text x="5" y="52">COL05</text></g><use href="#rule"/><use href="#hub"/><circle cx="39" cy="29" r="5.500" fill="#ee452e"/><path d="M39 29h5a5 5 0 0 1-3 4z" fill="#f0a82b"/></g>
                <g class="node" transform="translate(18 323)"><rect width="39" height="58" fill="#ff6049"/><g clip-path="url(#nc)"><text x="5" y="12" class="b">Photo</text><text x="5" y="26">90.9%,</text><text x="5" y="52">comme</text></g><use href="#rule"/><use href="#hub"/><circle cx="39" cy="29" r="5.500" fill="#ee452e"/><path d="M39 29l5-2v2z" fill="#46befa"/></g>
                <g class="node" transform="translate(176 323)"><rect width="39" height="58" fill="#e6f6ff"/><g clip-path="url(#nc)"><text x="5" y="12" class="b">Link</text><text x="5" y="26">66.7%,</text><text x="5" y="52">Catego</text></g><use href="#rule"/><use href="#hub"/><circle cx="39" cy="29" r="5.500" fill="#46befa"/><path d="M39 29h5a5 5 0 0 1-6 5z" fill="#a9f22b"/><path d="M39 29l-1 5-2-1z" fill="#ee452e"/></g>
                <g class="node" transform="translate(385 323)"><rect width="39" height="58" fill="#ff8d7e"/><g clip-path="url(#nc)"><text x="5" y="12" class="b">Photo</text><text x="5" y="26">80.0%,</text><text x="5" y="52">COL02</text></g><use href="#rule"/><use href="#hub"/><circle cx="39" cy="29" r="5.500" fill="#ee452e"/><path d="M39 29h5a5 5 0 0 1-4 5z" fill="#a9f22b"/></g>
                <g class="node" transform="translate(464 323)"><rect width="39" height="34" rx="3" fill="#b0ff29"/><g clip-path="url(#nc)"><text x="5" y="12" class="b">Status</text><text x="5" y="26">97.1%,</text></g><circle cx="39" cy="17" r="5.500" fill="#a9f22b"/></g>
                <g class="node" transform="translate(582 323)"><rect width="39" height="58" fill="#fff2f0"/><g clip-path="url(#nc)"><text x="5" y="12" class="b">Photo</text><text x="5" y="26">55.6%,</text><text x="5" y="52">COL09</text></g><use href="#rule"/><use href="#hub"/><circle cx="39" cy="29" r="5.500" fill="#ee452e"/><path d="M39 29l5-1a5 5 0 0 1-6 6z" fill="#f9a72b"/><path d="M39 29l-1 5a5 5 0 0 1-4-4z" fill="#a9f22b"/></g>
                <g class="node" transform="translate(714 323)"><rect width="39" height="58" fill="#ff7461"/></g>
                <g class="node" transform="translate(-8 399)"><rect width="39" height="34" rx="3" fill="#fb4a32"/><g clip-path="url(#nc)"><text x="5" y="12" class="b">Photo</text><text x="5" y="26">96.8%,</text></g><circle cx="39" cy="17" r="5.500" fill="#ee452e"/></g>
                <g class="node" transform="translate(44 399)"><rect width="39" height="34" rx="3" fill="#46befa"/><g clip-path="url(#nc)"><text x="5" y="12" class="b">Link</text><text x="5" y="26">100%,</text></g><circle cx="39" cy="17" r="5.500" fill="#46befa"/></g>
                <g class="node" transform="translate(123 399)"><rect width="39" height="58" fill="#74d0ff"/><g clip-path="url(#nc)"><text x="5" y="12" class="b">Link</text><text x="5" y="26">90.0%,</text><text x="5" y="52">COL05</text></g><use href="#rule"/><use href="#hub"/><circle cx="39" cy="29" r="5.500" fill="#46befa"/><path d="M39 29h5l-1 3z" fill="#ee452e"/></g>
                <g class="node" transform="translate(228 399)"><rect width="39" height="58" fill="#cfff7c"/><g clip-path="url(#nc)"><text x="5" y="12" class="b">Status</text><text x="5" y="26">80.0%,</text><text x="5" y="52">COL02</text></g><use href="#rule"/><use href="#hub"/><circle cx="39" cy="29" r="5.500" fill="#a9f22b"/><path d="M39 29l1-5a5 5 0 0 1 4 5z" fill="#46befa"/></g>
                <g class="node" transform="translate(359 399)"><rect width="39" height="34" rx="3" fill="#fff"/><g clip-path="url(#nc)"><text x="5" y="12" class="b">Photo</text><text x="5" y="26">50.0%,</text></g><circle cx="39" cy="17" r="5.500" fill="#ee452e"/><path d="M34 17a5 5 0 0 0 10 0z" fill="#a9f22b"/></g>
                <g class="node" transform="translate(412 399)"><rect width="39" height="34" rx="3" fill="#ee452e"/><g clip-path="url(#nc)"><text x="5" y="12" class="b">Photo</text><text x="5" y="26">100%,</text></g><circle cx="39" cy="17" r="5.500" fill="#ee452e"/></g>
                <g class="node" transform="translate(543 399)"><rect width="39" height="58" fill="#ff7e6e"/><g clip-path="url(#nc)"><text x="5" y="12" class="b">Photo</text><text x="5" y="26">83.3%,</text><text x="5" y="52">COL02</text></g><use href="#rule"/><use href="#hub"/><circle cx="39" cy="29" r="5.500" fill="#ee452e"/><path d="M39 29h5a5 5 0 0 1-3 4z" fill="#a9f22b"/></g>
                <g class="node" transform="translate(622 399)"><rect width="39" height="34" rx="3" fill="#ffeccb"/><g clip-path="url(#nc)"><text x="5" y="12" class="b">Video</text><text x="5" y="26">66.7%,</text></g><circle cx="39" cy="17" r="5.500" fill="#f9a72b"/><path d="M39 17l-4-3a5 5 0 0 1 9 3z" fill="#a9f22b"/></g>
                <g class="node" transform="translate(674 399)"><rect width="39" height="34" rx="3" fill="#ee452e"/><g clip-path="url(#nc)"><text x="5" y="12" class="b">Photo</text><text x="5" y="26">100%,</text></g><circle cx="39" cy="17" r="5.500" fill="#ee452e"/></g>
                <g class="node" transform="translate(97 474)"><rect width="39" height="34" rx="3" fill="#bfe8ff"/><g clip-path="url(#nc)"><text x="5" y="12" class="b">Link</text><text x="5" y="26">75.0%,</text></g><circle cx="39" cy="17" r="5.500" fill="#46befa"/><path d="M39 17h5a5 5 0 0 1-5 5z" fill="#ee452e"/></g>
                <g class="node" transform="translate(149 474)"><rect width="39" height="34" rx="3" fill="#46befa"/><g clip-path="url(#nc)"><text x="5" y="12" class="b">Link</text><text x="5" y="26">100%,</text></g><circle cx="39" cy="17" r="5.500" fill="#46befa"/></g>
                <g class="node" transform="translate(202 474)"><rect width="39" height="34" rx="3" fill="#a9f22b"/><g clip-path="url(#nc)"><text x="5" y="12" class="b">Status</text><text x="5" y="26">100%,</text></g><circle cx="39" cy="17" r="5.500" fill="#a9f22b"/></g>
                <g class="node" transform="translate(254 474)"><rect width="39" height="34" rx="3" fill="#fff"/><g clip-path="url(#nc)"><text x="5" y="12" class="b">Link</text><text x="5" y="26">50.0%,</text></g><circle cx="39" cy="17" r="5.500" fill="#46befa"/><path d="M34 17a5 5 0 0 0 10 0z" fill="#a9f22b"/></g>
                <g class="node" transform="translate(517 474)"><rect width="39" height="34" rx="3" fill="#fff"/><g clip-path="url(#nc)"><text x="5" y="12" class="b">Photo</text><text x="5" y="26">50.0%,</text></g><circle cx="39" cy="17" r="5.500" fill="#ee452e"/><path d="M34 17a5 5 0 0 0 10 0z" fill="#a9f22b"/></g>
                <g class="node" transform="translate(569 474)"><rect width="39" height="34" rx="3" fill="#ee452e"/><g clip-path="url(#nc)"><text x="5" y="12" class="b">Photo</text><text x="5" y="26">100%,</text></g><circle cx="39" cy="17" r="5.500" fill="#ee452e"/></g>
              </svg>
            </div>
            <div class="h-scroll"><button aria-label="Esquerda"><svg width="5" height="8" viewBox="0 0 5 8"><path d="M5 0v8L0 4z" fill="#444"/></svg></button><div class="track"><i></i></div><button aria-label="Direita"><svg width="5" height="8" viewBox="0 0 5 8"><path d="M0 0v8l5-4z" fill="#444"/></svg></button></div>
          </div>
        </div>
        <svg class="grip" width="12" height="12" viewBox="0 0 12 12"><path d="M10 1h1M7 4h1M10 4h1M4 7h1M7 7h1M10 7h1M1 10h1M4 10h1M7 10h1M10 10h1" stroke="#999"/></svg>
      </section>
    </div>
  </section>
</main>
</body>
</html>
```
FILE: styles.css
```css
* { box-sizing: border-box; }
body { margin: 0; overflow: hidden; font: 12px/16px "DejaVu Sans", sans-serif; color: #1a1a1a; }
button, input, select { font: inherit; color: inherit; }
button { background: none; border: 0; padding: 0; margin: 0; }
svg { display: block; flex: none; }
h1, h2, h3, p, figure { margin: 0; font-weight: normal; font-size: inherit; }
.defs { position: absolute; width: 0; height: 0; }

.desktop { display: grid; grid-template-columns: 1fr 1fr; height: 100vh; }
.screen { display: flex; min-width: 0; min-height: 0; overflow: hidden; }
.screen-left { flex-direction: column; }
.screen-body { flex: 1; display: flex; min-height: 0; }

/* top bar */
.topbar { height: 27px; flex: none; display: grid; grid-template-columns: 1fr auto 1fr; align-items: center; background: #1d1d1d; color: #f2f2f2; font: 14px/20px "Noto Sans", sans-serif; }
.topbar-left { display: flex; gap: 34px; padding-left: 12px; }
.app-menu { display: flex; align-items: center; gap: 6px; }
.clock { padding-left: 60px; }
.topbar-right { display: flex; justify-content: flex-end; align-items: center; gap: 12px; padding-right: 15px; }

/* dock */
.dock { width: 60px; flex: none; display: flex; flex-direction: column; gap: 4px; padding: 4px 4px 2px; background: linear-gradient(#47201f, #30182f 42%, #27152a 75%, #20141b); }
.dock-item { position: relative; flex: none; height: 52px; display: flex; align-items: center; justify-content: center; border-radius: 4px; }
.dock-item svg { width: 34px; height: 34px; }
.dock-item.run::before { content: ""; position: absolute; left: 0; top: 24px; width: 5px; height: 5px; border-radius: 50%; background: #e95420; }
.dock-item.many::before { box-shadow: 0 -7px #e95420, 0 7px #e95420; }
.dock-item.active { background: #50424f; }
.dock-apps { margin-top: auto; }

/* browser */
.browser { flex: 1; min-width: 0; display: flex; flex-direction: column; }
.chrome { position: relative; flex: none; background: linear-gradient(#ff84b3, #ff9ea2 45%, #ffb77c); border-bottom: 1px solid #a5734f; }
.theme { position: absolute; top: 0; }
.theme-l { left: 0; }
.theme-r { right: 0; }
.tabs { position: relative; display: flex; height: 33px; border-bottom: 1px solid #2a1748; }
.tab { flex: 1 1 0; min-width: 0; display: flex; align-items: center; gap: 5px; padding: 0 8px 0 9px; border-right: 1px solid #b86a92; font: 14px/20px "Noto Sans", sans-serif; color: #2b1a4d; text-align: left; overflow: hidden; }
.tab svg { width: 16px; height: 16px; }
.tab span { flex: 1; min-width: 0; overflow: hidden; white-space: nowrap; -webkit-mask-image: linear-gradient(90deg, #000 50%, transparent); mask-image: linear-gradient(90deg, #000 50%, transparent); }
.tab span.full { -webkit-mask-image: none; mask-image: none; }
.tab.green svg { color: #4fae7b; }
.tab.dark svg { color: #24292e; }
.tab.current { height: 33px; background: linear-gradient(#ffe0ec, #ffe6ea); border-top: 2px solid #ab71ff; border-right-color: #2a1748; border-left: 1px solid #2a1748; padding-bottom: 2px; }
.tab-tools { width: 172px; flex: none; display: flex; align-items: center; justify-content: space-between; padding: 0 9px; }
.win-controls { display: flex; align-items: center; gap: 16px; }
.navbar { position: relative; height: 40px; display: flex; align-items: center; padding: 0 3px 0 4px; background: rgba(255, 253, 248, .82); }
.navbar button { width: 32px; height: 32px; display: grid; place-items: center; }
.navbar button svg { width: 16px; height: 16px; fill: none; stroke: #5b2ad0; stroke-width: 1.8; }
.navbar .back { border: 1px solid #aaa6c4; border-radius: 50%; background: rgba(255, 255, 255, .4); }
.navbar .back svg, .navbar .faded svg { opacity: .5; }
.urlbar { flex: 1; min-width: 0; margin: 0 71px 0 62px; height: 30px; display: flex; align-items: center; gap: 12px; padding: 0 6px 0 7px; background: #fffafc; border: 1px solid #b9a9b5; border-radius: 3px; }
.urlbar .vsep { margin: 0 -5px; }
.vsep { width: 1px; height: 22px; background: #b5b1bb; flex: none; }
.vsep.tall { height: 34px; margin: 0 6px 0 9px; }
.url { flex: 1; min-width: 0; border: 0; outline: 0; padding: 0; margin-left: -4px; font: 14px/20px "Noto Sans", sans-serif; color: transparent; background: linear-gradient(90deg, #928ca0 79px, #1c1233 79px, #1c1233 144px, #928ca0 144px, #928ca0 84%, transparent); -webkit-background-clip: text; background-clip: text; }
.exts { display: flex; gap: 16px; }
.exts svg { width: 16px; height: 16px; }

/* pdf viewer */
.pdfbar { position: relative; height: 33px; flex: none; display: flex; align-items: center; padding: 0 8px; background: #f9f9fa; border-bottom: 1px solid #c8c8ca; font: 13px/16px "Noto Sans", sans-serif; }
.pdfbar button svg { width: 16px; height: 16px; fill: none; stroke: #4a4a4f; stroke-width: 1.5; }
.pdf-group { display: flex; align-items: center; gap: 6px; }
.pdf-nav { margin-left: 45px; }
.page-no { width: 56px; height: 26px; margin-left: 2px; padding: 0 7px; border: 1px solid #b5b5b8; border-radius: 2px; background: #fff; text-align: right; }
.pdf-zoom { margin-left: 349px; }
.select-wrap { position: relative; display: flex; }
.select-wrap select { appearance: none; -webkit-appearance: none; width: 100%; margin: 0; }
.select-wrap .arrow { position: absolute; right: 10px; top: 50%; margin-top: -2px; pointer-events: none; }
.zoom-wrap { margin-left: 4px; width: 141px; }
.zoom-wrap select { height: 28px; border: 0; padding: 0 6px; background: #d7d7db; font-size: 12px; }
.pdf-right { margin-left: auto; gap: 14px; }
.pdf-right .vsep { margin: 0 -4px 0 -5px; }
.pdf-view { position: relative; flex: 1; min-height: 0; overflow: hidden; padding-right: 11px; background: #ededef; }
.page { max-width: 1019px; margin: 0 auto 11px; background: #fff; box-shadow: 0 0 9px rgba(0, 0, 0, .3); font: 17px/27px Lato, sans-serif; color: #000; }
.page-a { display: flex; gap: 16px; padding: 0 121px 118px 142px; }
.page-a .text { flex: 1; min-width: 0; margin-top: -18px; display: flex; flex-direction: column; gap: 27px; }
.page-a h2 { display: flex; }
.page-a h2 span { width: 30px; }
.just span { display: block; text-align: justify; text-align-last: justify; }
.just .end { text-align-last: left; }
.figure { position: relative; flex: none; width: 259px; display: grid; grid-template-columns: repeat(4, minmax(0, 1fr)); align-content: start; padding-right: 4px; background: #f2f2f2; font: 10px/12px "Noto Sans", sans-serif; color: #333; }
.cell { height: 84px; display: flex; flex-direction: column; align-items: center; padding-top: 6px; gap: 9px; text-align: center; }
.cell svg { width: 40px; height: 40px; overflow: visible; }
.cell span { height: 24px; display: flex; align-items: center; white-space: nowrap; }
.cell.cap { height: 34px; }
.marker { position: absolute; left: 65px; top: 116px; width: 65px; height: 166px; border: 2px solid #ed1c24; }
.page-b { padding: 116px 142px 200px; }
.v-thumb { position: absolute; right: 3px; top: 182px; width: 6px; height: 41px; border-radius: 3px; background: #cfcfd1; }

/* right desktop */
.workspace { position: relative; flex: 1; min-width: 0; background: linear-gradient(#b92d20, #8b1b48 21%, #630f5e 39%, #440348 73%, #2b0022); }
.window { position: absolute; display: flex; flex-direction: column; border-radius: 7px 7px 0 0; overflow: hidden; }
.titlebar { position: relative; height: 37px; flex: none; display: flex; align-items: center; justify-content: center; border-bottom: 1px solid #222; }
.titlebar .win-controls { position: absolute; right: 8px; top: 9px; }
.titlebar h1 { font: bold 14px/20px "Noto Sans", sans-serif; color: #fff; }
.main-win { inset: 0 97px 6px 0; background: #fff; box-shadow: 0 2px 8px rgba(0, 0, 0, .5); }
.main-win .titlebar { background: #3d3c3a; }
.menubar { height: 20px; flex: none; display: flex; padding-left: 3px; background: #efebe7; border-bottom: 1px solid #cbc7c2; }
.menubar button { padding: 0 7px; color: #111; }
.menubar u { text-underline-offset: 3px; }
.main-body { flex: 1; min-height: 0; display: flex; }
.toolbox { width: 272px; flex: none; display: flex; flex-direction: column; border: 1px solid #aaa; border-top: 0; background: #f2f2f2; }
.tool-head { height: 19px; flex: none; background: linear-gradient(#626262, #7e7e7e); border-bottom: 2px solid #adadad; }
.drawer { height: 501px; overflow: hidden; display: flex; flex-direction: column; }
.category { height: 30px; flex: none; display: flex; align-items: center; gap: 10px; font-size: 14px; color: #333; }
.cat-icon { width: 37px; height: 30px; display: grid; place-items: center; border-right: 1px solid #aaa; }
.data { background: linear-gradient(#f4f4f4, #e8e8e8); }
.data .cat-icon { background: #ffcb8c; }
.vis { background: linear-gradient(#ffb7b1, #eda8a4); color: #000; }
.vis .cat-icon { border-color: transparent; }
.model { border-top: 1px solid #aaa; margin-top: 8px; }
.model .cat-icon { background: #fcc0da; }
.widgets { display: grid; grid-template-columns: repeat(4, 64px); font-size: 10px; line-height: 12px; color: #333; }
.widgets .cell { gap: 10px; }
.splitter { height: 8px; flex: none; border: solid #aaa; border-width: 2px 0; background: #eee; }
.help { flex: 1; padding: 4px; background: #fff; display: flex; flex-direction: column; align-items: flex-start; gap: 12px; }
.help h3 { font: bold 14px/17px "DejaVu Sans", sans-serif; color: #ffa500; }
.help a { color: #ffa500; text-underline-offset: 3px; }
.tool-foot { height: 28px; flex: none; display: grid; grid-template-columns: repeat(6, 1fr); border-top: 1px solid #999; }
.tool-foot button { display: grid; place-items: center; background: linear-gradient(#7c7c7c, #636363); border-right: 1px solid #969696; }
.tool-foot svg { width: 20px; height: 20px; overflow: visible; }
.tool-foot .on { background: #ffa840; }

.viewer { inset: 0 120px 52px 212px; background: #efebe7; border: 1px solid #8b8984; border-top: 0; box-shadow: 0 6px 18px rgba(0, 0, 0, .6); }
.viewer .titlebar { background: #322f30; }
.viewer-body { flex: 1; min-height: 0; display: flex; }
.controls { position: relative; width: 251px; flex: none; display: flex; flex-direction: column; padding: 3px 8px 2px 2px; }
.controls h2 { padding-left: 3px; line-height: 16px; }
.controls .second { margin-top: 28px; }
.box { border: 1px solid #d6d2cd; border-radius: 2px; background: #ebe7e2; padding: 8px; }
.info { margin-top: 3px; }
.form { margin-top: 3px; display: grid; grid-template-columns: auto 135px; justify-content: space-between; align-items: center; padding: 7px 10px 8px 8px; row-gap: 3px; }
.form .row { line-height: 24px; }
.form select { height: 24px; padding: 0 4px; border: 1px solid #a9a6a2; border-radius: 2px; background: linear-gradient(#fdfdfc, #eeecea); }
.form .combo select { background: linear-gradient(90deg, #fff 114px, #a9a6a2 114px, #a9a6a2 115px, #f4f2f1 115px); }
.form .arrow { right: 6px; }
input[type="range"] { -webkit-appearance: none; appearance: none; width: 100%; height: 16px; margin: 0; background: none; }
input[type="range"]::-webkit-slider-runnable-track { height: 5px; border: 1px solid #b0ada8; border-radius: 3px; background: #dad6d1; }
input[type="range"]::-webkit-slider-thumb { -webkit-appearance: none; width: 13px; height: 13px; margin-top: -5px; border: 1px solid #a9a6a2; border-radius: 3px; background: #fbfaf9; }
input.filled::-webkit-slider-runnable-track { background: linear-gradient(90deg, #3a9bdc 4px, #dad6d1 4px); }
.handle { position: absolute; right: 2px; top: 322px; }
.status { margin-top: auto; height: 20px; display: flex; align-items: center; gap: 7px; padding-left: 8px; }
.status svg { width: 14px; height: 14px; fill: none; stroke: #777; stroke-width: 1; }
.status i { width: 1px; height: 18px; margin: 0 4px 0 5px; background: #111; }
.scene-col { flex: 1; min-width: 0; display: flex; flex-direction: column; margin: 6px 5px 29px 0; border: 1px solid #b4b1ac; background: #fff; }
.scene { flex: 1; min-height: 0; overflow: hidden; }
.tree { font: 9px "DejaVu Sans", sans-serif; fill: #1a1a1a; }
.edges { fill: none; stroke: #a0a0a4; stroke-width: 1; }
.le { text-anchor: end; }
.node rect { stroke: #222; }
.node circle { stroke: #333; stroke-width: .8; }
.node .b { font-weight: bold; fill: #000; }
.h-scroll { height: 15px; flex: none; display: flex; border-top: 1px solid #b4b1ac; }
.h-scroll button { width: 14px; display: grid; place-items: center; background: #f8f7f6; }
.track { flex: 1; display: flex; padding-left: 2%; background: #e4e3df; border: solid #b4b1ac; border-width: 0 1px; }
.track i { width: 79%; background: linear-gradient(#fbfbfa, #f1efed); border: solid #b4b1ac; border-width: 0 1px; }
.grip { position: absolute; right: 1px; bottom: 1px; }
```
